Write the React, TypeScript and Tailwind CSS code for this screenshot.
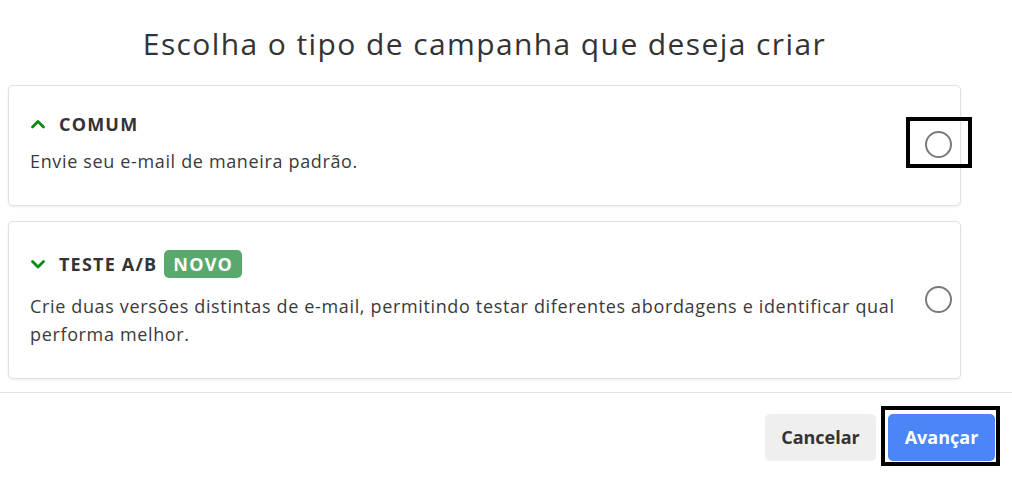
import React, { useState } from "react";

const FONT = { fontFamily: "'Open Sans', 'Liberation Sans', sans-serif" };

interface OptionCardProps {
  title: string;
  description: string;
  open: boolean;
  badge?: string;
  focused?: boolean;
  selected: boolean;
  onSelect: () => void;
  spacing: string;
}

const Chevron = ({ up }: { up: boolean }) => (
  <svg width="16" height="16" viewBox="0 0 16 16" className="shrink-0">
    <path
      d={up ? "M2.5 11 L8 5.5 L13.5 11" : "M2.5 5.5 L8 11 L13.5 5.5"}
      fill="none"
      stroke="#0b8a12"
      strokeWidth="2.8"
      strokeLinecap="round"
      strokeLinejoin="round"
    />
  </svg>
);

const OptionCard: React.FC<OptionCardProps> = ({
  title,
  description,
  open,
  badge,
  focused,
  selected,
  onSelect,
  spacing,
}) => {
  return (
    <div
      className={`flex items-center rounded-[5px] border border-[#e1e1e1] bg-white pl-[21px] pr-[8px] shadow-[0_1px_3px_rgba(0,0,0,0.08)] ${spacing}`}
    >
      <div className="flex-1 pr-[30px]">
        <div className="flex items-center">
          <Chevron up={open} />
          <span className="ml-[13px] text-[18px] leading-[22px] font-bold tracking-[1.2px] text-[#333]">
            {title}
          </span>
          {badge && (
            <span className="ml-[7px] rounded-[5px] bg-[#59a96c] px-[9px] text-[18px] leading-[28px] font-bold tracking-[1.2px] text-white">
              {badge}
            </span>
          )}
        </div>
        <p
          className={`${badge ? "mt-[14px]" : "mt-3"} text-[18px] leading-[28px] tracking-[0.65px] text-[#3a3a3a]`}
        >
          {description}
        </p>
      </div>
      <div className="relative">
        <button
          onClick={onSelect}
          className="flex h-[27px] w-[27px] items-center justify-center rounded-full border-2 border-[#7a7a7a] bg-white"
        >
          {selected && <span className="h-3 w-3 rounded-full bg-[#4a86f7]" />}
        </button>
        {focused && (
          <div className="pointer-events-none absolute -left-[19px] -top-[14px] h-[51px] w-[66px] border-4 border-black" />
        )}
      </div>
    </div>
  );
};

export default function App() {
  const [selected, setSelected] = useState<string>("");

  return (
    <div className="flex h-[478px] w-[1012px] flex-col bg-white" style={FONT}>
      <div className="pl-2 pr-[51px]">
        <h1 className="pt-[24px] pb-[22px] text-center text-[30px] leading-[39px] font-normal tracking-[1.4px] text-[#333]">
          Escolha o tipo de campanha que deseja criar
        </h1>
        <div className="flex flex-col gap-[15px]">
          <OptionCard
            title="COMUM"
            description="Envie seu e-mail de maneira padrão."
            open={true}
            focused
            spacing="pt-[27px] pb-[30px]"
            selected={selected === "comum"}
            onSelect={() => setSelected("comum")}
          />
          <OptionCard
            title="TESTE A/B"
            badge="NOVO"
            description="Crie duas versões distintas de e-mail, permitindo testar diferentes abordagens e identificar qual performa melhor."
            open={false}
            spacing="pt-7 pb-[30px]"
            selected={selected === "ab"}
            onSelect={() => setSelected("ab")}
          />
        </div>
      </div>
      <div className="mt-[13px] flex items-start justify-end gap-[5px] border-t border-[#e3e3e3] pt-[13px] pr-[12px]">
        <button className="mt-[8px] h-[47px] w-[111px] rounded-[5px] bg-[#efefef] text-[18px] font-bold text-[#333]">
          Cancelar
        </button>
        <div className="border-4 border-black pt-[4px] pl-[3px] pr-[1px] pb-[1px]">
          <button className="h-[47px] w-[107px] rounded-[5px] bg-[#4a86f7] text-[18px] font-bold text-white">
            Avançar
          </button>
        </div>
      </div>
    </div>
  );
}
